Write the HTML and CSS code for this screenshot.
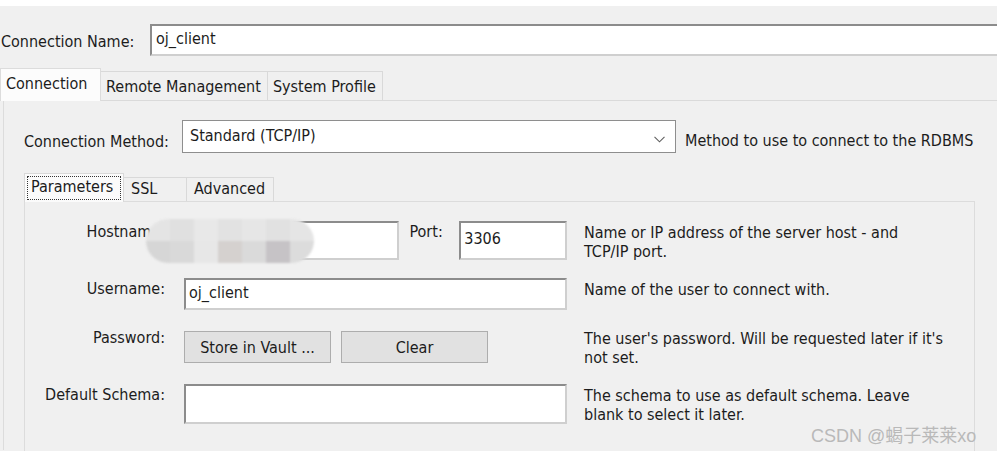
FILE: index.html
```html
<!DOCTYPE html>
<html lang="en">
<head>
  <meta charset="UTF-8">
  <title>Setup New Connection</title>
  <link rel="stylesheet" href="styles.css">
</head>
<body>
  <div class="top-strip"></div>

  <div class="name-row">
    <label class="name-label">Connection Name:</label>
    <div class="text-box name-box">oj_client</div>
  </div>

  <div class="tab-strip">
    <div class="tab active">Connection</div>
    <div class="tab">Remote Management</div>
    <div class="tab">System Profile</div>
  </div>

  <div class="pane">
    <div class="method-row">
      <label class="method-label">Connection Method:</label>
      <div class="select-box">
        <span>Standard (TCP/IP)</span>
        <svg class="chevron" width="11" height="7" viewBox="0 0 11 7">
          <path d="M0.5 0.8 L5.5 5.8 L10.5 0.8" fill="none" stroke="#606060" stroke-width="1.1"/>
        </svg>
      </div>
      <span class="method-desc">Method to use to connect to the RDBMS</span>
    </div>

    <div class="sub-tabs">
      <div class="sub-tab active"><span class="focus">Parameters</span></div>
      <div class="sub-tab">SSL</div>
      <div class="sub-tab">Advanced</div>
    </div>

    <div class="sub-pane">
      <div class="form-grid">
        <label class="field-label">Hostname:</label>
        <div class="host-field">
          <div class="text-box host-box"></div>
          <label class="port-label">Port:</label>
          <div class="text-box port-box">3306</div>
          <div class="mosaic">
            <i style="background:#e4e4e4"></i><i style="background:#e0e0e0"></i><i style="background:#e8e8e8"></i><i style="background:#e2e2e2"></i><i style="background:#e6e6e6"></i><i style="background:#e1e1e1"></i><i style="background:#e5e5e5"></i>
            <i style="background:#d6d6d6"></i><i style="background:#d9d9d9"></i><i style="background:#e7e7e7"></i><i style="background:#d5d1cf"></i><i style="background:#dadada"></i><i style="background:#c6c3c6"></i><i style="background:#dcdcdc"></i>
          </div>
        </div>
        <p class="desc host-desc">Name or IP address of the server host - and<br>TCP/IP port.</p>

        <label class="field-label">Username:</label>
        <div class="text-box user-box">oj_client</div>
        <p class="desc">Name of the user to connect with.</p>

        <label class="field-label pass-label">Password:</label>
        <div class="button-row">
          <button class="win-button">Store in Vault ...</button>
          <button class="win-button">Clear</button>
        </div>
        <p class="desc pass-desc">The user's password. Will be requested later if it's<br>not set.</p>

        <label class="field-label">Default Schema:</label>
        <div class="text-box schema-box"></div>
        <p class="desc">The schema to use as default schema. Leave<br>blank to select it later.</p>
      </div>
    </div>
  </div>

  <div class="watermark">CSDN @蝎子莱莱xo</div>
</body>
</html>
```

FILE: styles.css
```css
body {
  margin: 0;
  width: 997px;
  height: 451px;
  overflow: hidden;
  position: relative;
  background-color: #f0f0f0;
  font-family: "DejaVu Sans Condensed", "DejaVu Sans", sans-serif;
  font-size: 16px;
  color: #1c1c1c;
}
.top-strip {
  height: 6px;
  background: #fff;
}
.text-box {
  box-sizing: border-box;
  background: #fff;
  border: 2px solid #8a8a8a;
  border-color: #8c8c8c #cfcfcf #cfcfcf #8c8c8c;
  padding: 3px 3px;
  line-height: 20px;
}
.name-row {
  display: flex;
  align-items: center;
  margin-top: 18px;
  height: 32px;
}
.name-label {
  width: 149px;
  padding-left: 1px;
  padding-top: 3px;
}
.name-box {
  flex: 1;
  height: 32px;
  margin-right: -4px;
  padding-left: 4px;
  padding-top: 3px;
}
.tab-strip {
  display: flex;
  align-items: flex-end;
  margin-top: 12px;
  height: 32px;
  border-bottom: 1px solid #dadada;
}
.tab {
  box-sizing: border-box;
  height: 29px;
  padding: 5px 6px 0 5px;
  border: 1px solid #d9d9d9;
  border-bottom: none;
  margin-left: -1px;
  background: #f0f0f0;
}
.tab.active {
  padding-top: 5px;
  margin-left: 0;
  width: 101px;
  background: #fcfcfc;
  border-color: #dcdcdc;
  position: relative;
  z-index: 1;
  margin-bottom: -1px;
  height: 33px;
}
.pane {
  margin-left: 3px;
  border-left: 1px solid #dcdcdc;
  padding: 19px 0 0 20px;
  height: 330px;
}
.method-row {
  display: flex;
  align-items: center;
  height: 32px;
}
.method-label {
  width: 158px;
  padding-top: 10px;
}
.select-box {
  box-sizing: border-box;
  width: 494px;
  height: 33px;
  background: #fff;
  border: 1px solid #8e8e8e;
  display: flex;
  align-items: flex-start;
  justify-content: space-between;
  padding: 5px 10px 0 7px;
}
.chevron {
  margin-top: 10px;
}
.method-desc {
  margin-left: 9px;
  padding-top: 8px;
}
.sub-tabs {
  display: flex;
  align-items: flex-end;
  margin-top: 20px;
  height: 29px;
}
.sub-tab {
  box-sizing: border-box;
  height: 24px;
  padding: 1px 8px 0 7px;
  border: 1px solid #d9d9d9;
  border-bottom: none;
  margin-left: -1px;
  background: #f0f0f0;
}
.sub-tab.active {
  margin-left: 0;
  width: 100px;
  height: 29px;
  padding: 2px 2px 0 2px;
  background: #fbfbfb;
  margin-bottom: -1px;
  position: relative;
  z-index: 1;
}
.sub-tab:nth-child(2) {
  width: 64px;
}
.focus {
  display: block;
  border: 1px dotted #333;
  padding: 0 3px 1px 3px;
  height: 21px;
}
.sub-pane {
  width: 951px;
  height: 260px;
  border: 1px solid #dcdcdc;
  border-bottom: none;
  box-sizing: border-box;
}
.form-grid {
  display: grid;
  grid-template-columns: 140px 383px 1fr;
  column-gap: 19px;
  align-items: start;
  padding-top: 19px;
}
.form-grid > * {
  margin-bottom: 18px;
}
.field-label {
  text-align: right;
  padding-top: 1px;
}
.host-field {
  display: flex;
  align-items: flex-start;
  position: relative;
}
.host-box {
  width: 216px;
  height: 39px;
}
.port-label {
  margin-left: 10px;
  width: 50px;
  padding-top: 1px;
}
.port-box {
  width: 108px;
  height: 39px;
  padding-top: 6px;
}
.user-box {
  height: 32px;
  padding: 3px 3px;
  margin-bottom: 21px;
}
.schema-box {
  height: 40px;
}
.desc {
  margin: 0;
  margin-left: -2px;
  line-height: 19px;
  padding-top: 2px;
}
.host-desc {
  margin-bottom: 17px;
}
.pass-label {
  margin-top: -4px;
}
.pass-desc {
  margin-top: -4px;
  margin-bottom: 17px;
}
.button-row {
  display: flex;
  gap: 10px;
}
.win-button {
  box-sizing: border-box;
  font: inherit;
  color: inherit;
  height: 32px;
  width: 147px;
  background: #e1e1e1;
  border: 1px solid #adadad;
  padding: 0;
}
.mosaic {
  position: absolute;
  left: -38px;
  top: -2px;
  width: 168px;
  height: 44px;
  border-radius: 22px;
  overflow: hidden;
  display: grid;
  grid-template-columns: repeat(7, 1fr);
  grid-template-rows: 1fr 1fr;
  filter: blur(1px);
}
.watermark {
  position: absolute;
  left: 811px;
  top: 421px;
  font-family: "Liberation Sans", "Noto Sans CJK SC", sans-serif;
  font-size: 18px;
  color: #b9b9b9;
}
```
